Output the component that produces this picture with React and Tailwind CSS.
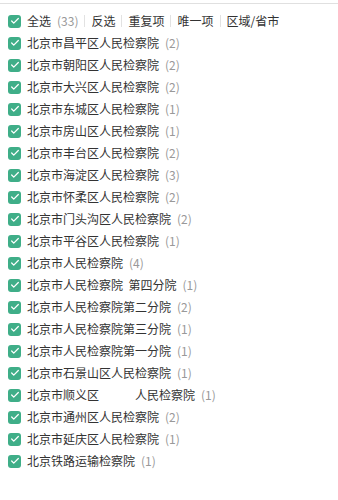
import { Check } from 'lucide-react'

const items = [
  ['北京市昌平区人民检察院', 2],
  ['北京市朝阳区人民检察院', 2],
  ['北京市大兴区人民检察院', 2],
  ['北京市东城区人民检察院', 1],
  ['北京市房山区人民检察院', 1],
  ['北京市丰台区人民检察院', 2],
  ['北京市海淀区人民检察院', 3],
  ['北京市怀柔区人民检察院', 2],
  ['北京市门头沟区人民检察院', 2],
  ['北京市平谷区人民检察院', 1],
  ['北京市人民检察院', 4],
  ['北京市人民检察院  第四分院', 1],
  ['北京市人民检察院第二分院', 2],
  ['北京市人民检察院第三分院', 1],
  ['北京市人民检察院第一分院', 1],
  ['北京市石景山区人民检察院', 1],
  ['北京市顺义区\u3000\u3000\u3000人民检察院', 1],
  ['北京市通州区人民检察院', 2],
  ['北京市延庆区人民检察院', 1],
  ['北京铁路运输检察院', 1],
]

function Box() {
  return (
    <span className="w-[13px] h-[13px] rounded-[3px] bg-[#3fae88] flex items-center justify-center shrink-0">
      <Check className="w-[10px] h-[10px] text-white" strokeWidth={3} />
    </span>
  )
}

function Sep() {
  return <span className="w-px h-[12px] bg-[#e2e2e2] mx-[6px]" />
}

export default function App() {
  return (
    <div
      className="w-[338px] h-[500px] bg-white text-[12px] text-[#333]"
      style={{ fontFamily: '"Noto Sans CJK SC", "Noto Sans", sans-serif' }}
    >
      <div className="mt-[3px] border-t border-[#e0e0e0] pt-[6px]">
        <div className="flex items-center h-[22px] pl-[8px]">
          <Box />
          <span className="ml-[6px]">全选</span>
          <span className="ml-[6px] text-[#999]">(33)</span>
          <Sep />
          <span>反选</span>
          <Sep />
          <span>重复项</span>
          <Sep />
          <span>唯一项</span>
          <Sep />
          <span>区域/省市</span>
        </div>
        {items.map(([name, n]) => (
          <div key={name} className="flex items-center h-[22px] pl-[8px]">
            <Box />
            <span className="ml-[6px] whitespace-pre">{name}</span>
            <span className="ml-[6px] text-[#999]">({n})</span>
          </div>
        ))}
      </div>
    </div>
  )
}
